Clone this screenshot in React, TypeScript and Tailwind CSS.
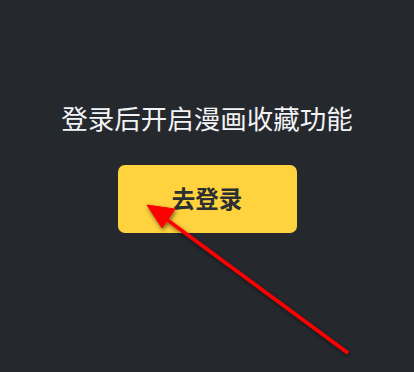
export default function App() {
  return (
    <div
      className="relative flex h-[372px] w-[414px] flex-col items-center overflow-hidden bg-[#25282d] pt-[100px]"
      style={{ fontFamily: '"Noto Sans CJK SC", "Noto Sans", sans-serif' }}
    >
      <p className="text-[26.5px] leading-[36px] text-[#f2f3f5]">登录后开启漫画收藏功能</p>
      <button className="mt-[29px] flex h-[68px] w-[179px] items-center justify-center rounded-[7px] bg-[#ffd33d] text-[23.5px] font-bold text-[#2b2e33]">
        去登录
      </button>

      {/* annotation arrow */}
      <svg
        className="pointer-events-none absolute left-0 top-0"
        width="414"
        height="372"
        viewBox="0 0 414 372"
      >
        <defs>
          <filter id="sh" x="-50%" y="-50%" width="200%" height="200%">
            <feDropShadow dx="1" dy="2" stdDeviation="2" floodColor="#000" floodOpacity="0.55" />
          </filter>
        </defs>
        <g filter="url(#sh)" fill="#ff0000" stroke="#ff0000">
          <line x1="348" y1="353" x2="162" y2="216" strokeWidth="3.5" />
          <polygon points="147,205 175,209 162,228" strokeWidth="1" strokeLinejoin="round" />
        </g>
      </svg>
    </div>
  );
}
